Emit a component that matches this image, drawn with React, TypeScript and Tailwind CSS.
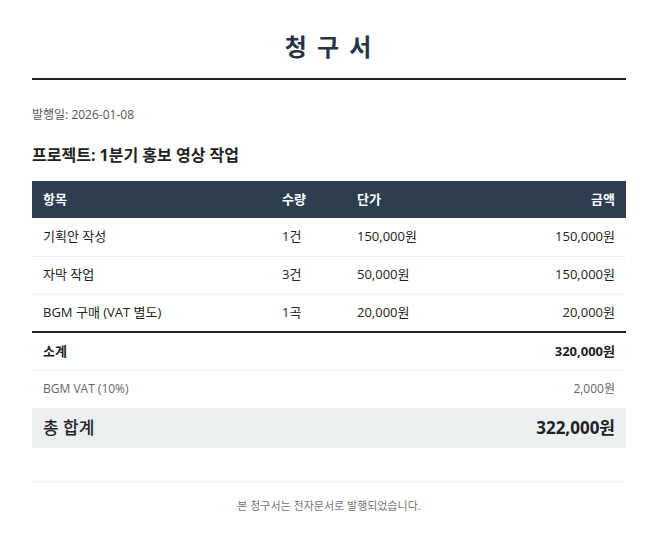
export default function App() {
  const items = [
    { name: "기획안 작성", qty: "1건", price: "150,000원", amount: "150,000원" },
    { name: "자막 작업", qty: "3건", price: "50,000원", amount: "150,000원" },
    { name: "BGM 구매 (VAT 별도)", qty: "1곡", price: "20,000원", amount: "20,000원" },
  ];

  return (
    <div
      className="min-h-screen bg-white px-8 pt-[30px] text-[#222]"
      style={{ fontFamily: '"Open Sans", "Noto Sans CJK KR", sans-serif' }}
    >
      <h1 className="text-center text-[24px] font-bold tracking-[2px] leading-[34px] text-[#263445] pb-[14px] border-b-2 border-[#222]">
        청 구 서
      </h1>

      <p className="mt-[26px] text-[12px] leading-[18px] text-[#555]">발행일: 2026-01-08</p>

      <h2 className="mt-[20px] text-[16px] font-bold leading-[22px] text-[#222]">
        프로젝트: 1분기 홍보 영상 작업
      </h2>

      <table className="mt-[15px] w-full table-fixed border-collapse text-[13px]">
        <colgroup>
          <col className="w-[239px]" />
          <col className="w-[75px]" />
          <col className="w-[140px]" />
          <col />
        </colgroup>
        <thead>
          <tr className="bg-[#2c3e50] text-white">
            <th className="h-[37px] px-[11px] text-left font-bold">항목</th>
            <th className="h-[37px] px-[11px] text-left font-bold">수량</th>
            <th className="h-[37px] px-[11px] text-left font-bold">단가</th>
            <th className="h-[37px] px-[11px] text-right font-bold">금액</th>
          </tr>
        </thead>
        <tbody>
          {items.map((it, i) => (
            <tr
              key={it.name}
              className={i < items.length - 1 ? "border-b border-[#eee]" : "border-b-2 border-[#222]"}
            >
              <td className="h-[38px] px-[11px]">{it.name}</td>
              <td className="h-[38px] px-[11px]">{it.qty}</td>
              <td className="h-[38px] px-[11px]">{it.price}</td>
              <td className="h-[38px] px-[11px] text-right">{it.amount}</td>
            </tr>
          ))}
          <tr className="border-b border-[#eee]">
            <td colSpan={3} className="h-[38px] px-[11px] font-bold">소계</td>
            <td className="h-[38px] px-[11px] text-right font-bold">320,000원</td>
          </tr>
          <tr>
            <td colSpan={3} className="h-[38px] px-[11px] text-[12px] text-[#666]">BGM VAT (10%)</td>
            <td className="h-[38px] px-[11px] text-right text-[12px] text-[#666]">2,000원</td>
          </tr>
          <tr className="bg-[#ecf0f1]">
            <td colSpan={3} className="h-[40px] px-[11px] text-[17px] font-medium">총 합계</td>
            <td className="h-[40px] px-[11px] text-right text-[17px] font-bold">322,000원</td>
          </tr>
        </tbody>
      </table>

      <div className="mt-[33px] border-t border-[#eee] pt-[16px] pb-8 text-center text-[11px] text-[#777]">
        본 청구서는 전자문서로 발행되었습니다.
      </div>
    </div>
  );
}
